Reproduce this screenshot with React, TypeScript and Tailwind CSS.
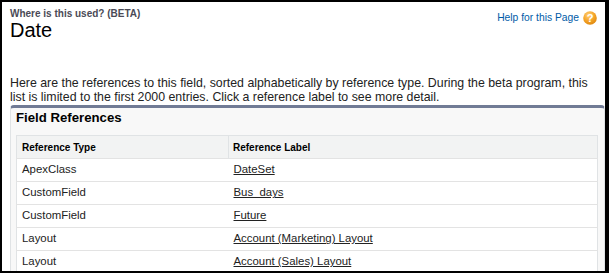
import React from "react";

const rows: { type: string; label: string }[] = [
  { type: "ApexClass", label: "DateSet" },
  { type: "CustomField", label: "Bus_days" },
  { type: "CustomField", label: "Future" },
  { type: "Layout", label: "Account (Marketing) Layout" },
  { type: "Layout", label: "Account (Sales) Layout" },
];

function HelpIcon() {
  return (
    <svg width="14" height="14" viewBox="0 0 14 14" className="shrink-0">
      <defs>
        <radialGradient id="hg" cx="40%" cy="30%" r="70%">
          <stop offset="0%" stopColor="#ffd27a" />
          <stop offset="60%" stopColor="#f5a427" />
          <stop offset="100%" stopColor="#e08a10" />
        </radialGradient>
      </defs>
      <circle cx="7" cy="7" r="6.8" fill="url(#hg)" />
      <text
        x="7"
        y="10.8"
        textAnchor="middle"
        fontSize="11"
        fontWeight="bold"
        fill="#fff"
        fontFamily="Liberation Sans, Arial, sans-serif"
      >
        ?
      </text>
    </svg>
  );
}

export default function App() {
  return (
    <div className="h-[273px] w-[609px] overflow-hidden border-b-2 border-l-2 border-r-4 border-t-2 border-black bg-white font-['Liberation_Sans',Arial,sans-serif] text-[#333]">
      <div className="flex justify-between pl-2 pr-2 pt-[6px]">
        <div>
          <div className="text-[10px] font-bold leading-[12px] text-[#4a4a56]">
            Where is this used? (BETA)
          </div>
          <h1 className="text-[20px] leading-[20px] text-black">Date</h1>
        </div>
        <a className="mt-[2px] flex h-fit items-center gap-[4px] text-[10.3px] text-[#015ba7]">
          Help for this Page
          <HelpIcon />
        </a>
      </div>

      <p className="mt-[36px] pl-2 pr-2 text-[12.35px] leading-[14px] text-[#222]">
        Here are the references to this field, sorted alphabetically by reference type. During the beta program, this
        list is limited to the first 2000 entries. Click a reference label to see more detail.
      </p>

      <div className="ml-2 mt-px rounded-t-[4px] border-x border-t-[3px] border-x-[#e0e3e5] border-t-[#717b95] bg-[#f8f8f8] pb-2 pl-[5px] pr-[6px]">
        <h2 className="pb-[9px] pt-[2px] text-[13.2px] font-bold leading-[16px] text-black">Field References</h2>
        <table className="w-full border-collapse border border-[#e0e3e5] bg-white text-left">
          <thead>
            <tr className="h-[23px] bg-[#f2f3f3]">
              <th className="w-[212px] px-[5px] text-[10px] font-bold text-black">Reference Type</th>
              <th className="border-l border-[#e0e3e5] px-[4px] text-[10px] font-bold text-black">
                Reference Label
              </th>
            </tr>
          </thead>
          <tbody>
            {rows.map((r, i) => (
              <tr key={i} className="h-[23px] border-t border-[#e3e3e3]">
                <td className="px-[5px] text-[11.4px] text-[#222]">{r.type}</td>
                <td className="px-[5px] text-[11.4px] text-[#222]">
                  <a className="underline">{r.label}</a>
                </td>
              </tr>
            ))}
          </tbody>
        </table>
      </div>
    </div>
  );
}
